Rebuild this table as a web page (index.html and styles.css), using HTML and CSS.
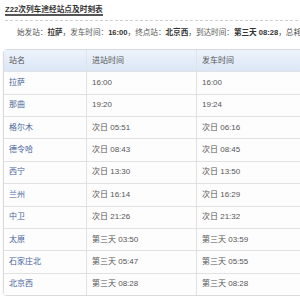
FILE: index.html
```html
<!DOCTYPE html>
<html lang="zh">
<head>
<meta charset="utf-8">
<title>Z22次列车途经站点及时刻表</title>
<link rel="stylesheet" href="styles.css">
</head>
<body>
<div class="wrap">
  <div class="head"><span class="title">Z22次列车途经站点及时刻表</span></div>
  <p class="info">始发站：<b>拉萨</b>，发车时间：<b>16:00</b>，终点站：<b>北京西</b>，到达时间：<b>第三天 08:28</b>，总耗时：<b>40小时28分</b></p>
  <table class="tt">
    <thead>
      <tr><th class="c1">站名</th><th class="c2">进站时间</th><th class="c3">发车时间</th></tr>
    </thead>
    <tbody>
      <tr><td class="st">拉萨</td><td>16:00</td><td>16:00</td></tr>
      <tr><td class="st">那曲</td><td>19:20</td><td>19:24</td></tr>
      <tr><td class="st">格尔木</td><td>次日 05:51</td><td>次日 06:16</td></tr>
      <tr><td class="st">德令哈</td><td>次日 08:43</td><td>次日 08:45</td></tr>
      <tr><td class="st">西宁</td><td>次日 13:30</td><td>次日 13:50</td></tr>
      <tr><td class="st">兰州</td><td>次日 16:14</td><td>次日 16:29</td></tr>
      <tr><td class="st">中卫</td><td>次日 21:26</td><td>次日 21:32</td></tr>
      <tr><td class="st">太原</td><td>第三天 03:50</td><td>第三天 03:59</td></tr>
      <tr><td class="st">石家庄北</td><td>第三天 05:47</td><td>第三天 05:55</td></tr>
      <tr><td class="st">北京西</td><td>第三天 08:28</td><td>第三天 08:28</td></tr>
    </tbody>
  </table>
</div>
</body>
</html>
```
FILE: styles.css
```css
html, body {
  margin: 0;
  padding: 0;
  background: #fff;
  overflow: hidden;
}
body {
  font-family: "Liberation Sans", "Noto Sans CJK SC", sans-serif;
  font-size: 8px;
  color: #555;
}
.wrap {
  padding: 0 0 0 3px;
  width: 320px;
}
.head {
  padding-top: 5px;
  box-sizing: border-box;
  height: 21px;
  border-bottom: 1px dashed #cfcfcf;
  margin-left: 2px;
}
.title {
  display: inline-block;
  font-weight: bold;
  font-size: 7.7px;
  line-height: 9px;
  color: #333;
  border-bottom: 2px solid #555;
}
.info {
  margin: 0;
  padding: 8px 0 12px 14px;
  font-size: 7.6px;
  line-height: 8px;
  white-space: nowrap;
  color: #555;
}
.info b {
  color: #333;
}
.tt {
  border-collapse: separate;
  border-spacing: 0;
  width: 306px;
  border: 1px solid #dadada;
  border-radius: 4px;
  box-shadow: 0 1px 2px rgba(0, 0, 0, 0.08);
  table-layout: fixed;
}
.tt th, .tt td {
  height: 21.36px;
  padding: 0 0 0 5px;
  text-align: left;
  font-weight: normal;
  font-size: 8px;
  line-height: 8px;
  border-bottom: 1px solid #e2e2e2;
  border-right: 1px solid #e2e2e2;
  white-space: nowrap;
}
.tt th:last-child, .tt td:last-child {
  border-right: none;
}
.tt tbody tr:last-child td {
  border-bottom: none;
}
.tt th {
  background: linear-gradient(#edf3fc, #dbe6f6);
  color: #555;
}
.tt td {
  background: #fdfdfd;
  color: #555;
}
.tt td.st {
  color: #46629b;
}
.c1 { width: 77px; }
.c2 { width: 104px; }
```
